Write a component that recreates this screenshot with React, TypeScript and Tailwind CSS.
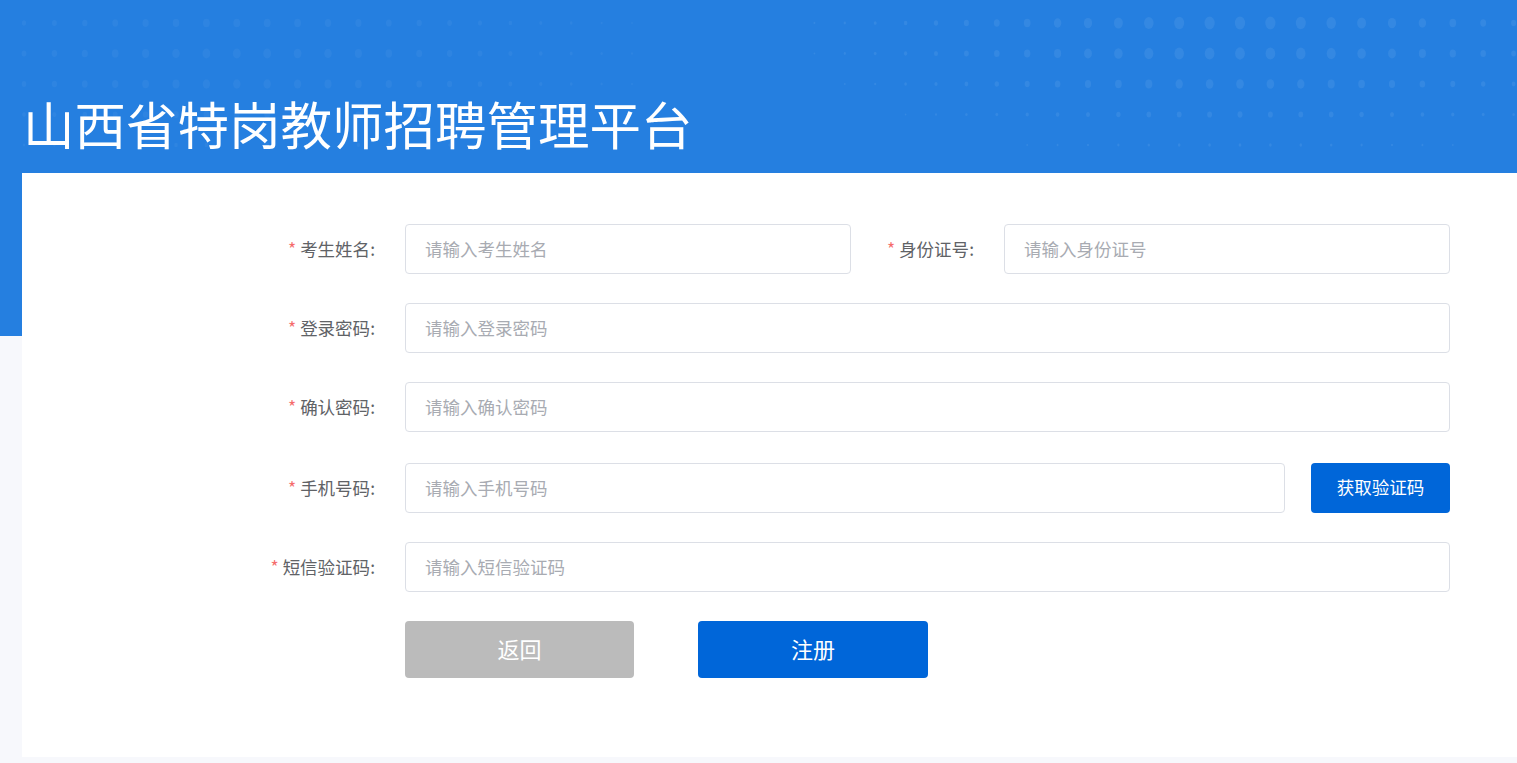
import React from 'react';

const blobs = [
  { cx: 1240, cy: 30, sx: 230, sy: 70, r: 6.5, o: 0.07 },
  { cx: 250, cy: 60, sx: 230, sy: 70, r: 5, o: 0.045 },
];

const HeaderDots = () => {
  const dots: { x: number; y: number; r: number; o: number }[] = [];
  for (let j = 0; j < 6; j++) {
    for (let i = 0; i < 50; i++) {
      const x = 24 + i * 30.4;
      const y = 23 + j * 30.5;
      let r = 0;
      let o = 0;
      for (const b of blobs) {
        const dx = (x - b.cx) / b.sx;
        const dy = (y - b.cy) / b.sy;
        const v = b.r * Math.exp(-(dx * dx + dy * dy) / 2);
        if (v > r) {
          r = v;
          o = b.o;
        }
      }
      if (r > 1) dots.push({ x, y, r, o });
    }
  }
  return (
    <svg className="absolute left-0 top-0" width="1517" height="336">
      {dots.map((d, k) => (
        <ellipse key={k} cx={d.x} cy={d.y} rx={d.r * 0.8} ry={d.r} fill="#ffffff" fillOpacity={d.o} />
      ))}
    </svg>
  );
};

const Label = ({ text }: { text: string }) => (
  <label className="w-[120px] shrink-0 pr-[6px] text-right text-[17.5px] text-[#606266]">
    <span className="mr-[4px] text-[#f56c6c]">*</span>
    {text}:
  </label>
);

const Input = ({ placeholder }: { placeholder: string }) => (
  <input
    placeholder={placeholder}
    className="h-[50px] min-w-0 flex-1 rounded-[4px] border border-[#dcdfe6] bg-white px-[19px] pb-[2px] text-[17.5px] text-[#606266] placeholder:text-[#a8abb2] outline-none"
  />
);

const Field = ({ label, placeholder }: { label: string; placeholder: string }) => (
  <div className="flex items-center gap-[24px]">
    <Label text={label} />
    <Input placeholder={placeholder} />
  </div>
);

export default function RegisterPage() {
  return (
    <div className="min-h-screen bg-[#f7f8fc] [font-family:'Noto_Sans_CJK_SC','Liberation_Sans',sans-serif]">
      <header className="relative h-[336px] overflow-hidden bg-[#257fe0]">
        <HeaderDots />
        <h1 className="relative pl-[23px] pt-[97px] text-[51.5px] font-normal leading-none text-white">
          山西省特岗教师招聘管理平台
        </h1>
      </header>

      <main className="relative -mt-[163px] ml-[22px] bg-white pb-[79px] pl-[239px] pr-[67px] pt-[51px]">
        <div className="grid grid-cols-2 gap-x-[9px]">
          <Field label="考生姓名" placeholder="请输入考生姓名" />
          <Field label="身份证号" placeholder="请输入身份证号" />
        </div>
        <div className="mt-[29px]">
          <Field label="登录密码" placeholder="请输入登录密码" />
        </div>
        <div className="mt-[29px]">
          <Field label="确认密码" placeholder="请输入确认密码" />
        </div>
        <div className="mt-[31px] flex items-center gap-[26px]">
          <div className="flex-1">
            <Field label="手机号码" placeholder="请输入手机号码" />
          </div>
          <button className="h-[50px] w-[139px] rounded-[4px] bg-[#0066d9] pb-[2px] text-[17.5px] text-white">
            获取验证码
          </button>
        </div>
        <div className="mt-[29px]">
          <Field label="短信验证码" placeholder="请输入短信验证码" />
        </div>
        <div className="mt-[29px] flex gap-[64px] pl-[144px]">
          <button className="h-[57px] w-[229px] rounded-[4px] bg-[#bbbbbb] pb-[2px] text-[22px] text-white">返回</button>
          <button className="h-[57px] w-[230px] rounded-[4px] bg-[#0066d9] pb-[2px] text-[22px] text-white">注册</button>
        </div>
      </main>
    </div>
  );
}
